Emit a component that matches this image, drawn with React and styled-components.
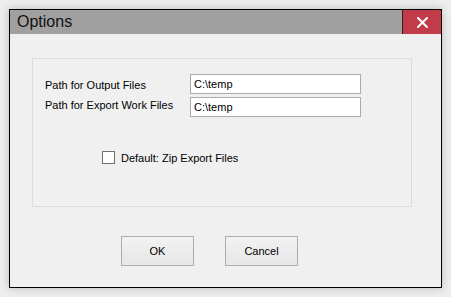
import React from "react";
import styled, {createGlobalStyle} from "styled-components";

const GlobalStyle = createGlobalStyle`
    html, body {
        margin: 0;
        padding: 0;
        background: #ededed;
    }
    body {
        font-family: "Liberation Sans", Arial, sans-serif;
        font-size: 11px;
        color: #000;
    }
`;

const Page = styled.div`
    width: 451px;
    height: 297px;
    padding: 9px 0 0 9px;
    box-sizing: border-box;
`;

const Window = styled.div`
    display: flex;
    flex-direction: column;
    width: 433px;
    height: 279px;
    border: 1px solid #000;
    background: #f0f0f0;
    box-sizing: border-box;
    box-shadow: 0 0 8px rgba(0, 0, 0, 0.22);
`;

const TitleBar = styled.div`
    display: flex;
    align-items: center;
    height: 24px;
    background: #a0a0a0;
`;

const Title = styled.div`
    flex: 1;
    padding-left: 7px;
    font-size: 16px;
    color: #111;
`;

const CloseButton = styled.div`
    display: flex;
    align-items: center;
    justify-content: center;
    width: 39px;
    height: 24px;
    border-left: 1px solid #3a1a1e;
    background: #c23b48;
    box-sizing: border-box;
`;

const Body = styled.div`
    flex: 1;
    display: flex;
    flex-direction: column;
    padding: 24px 0 0 22px;
`;

const GroupBox = styled.div`
    display: flex;
    flex-direction: column;
    width: 380px;
    height: 149px;
    padding: 15px 0 0 12px;
    border: 1px solid #dcdcdc;
    box-sizing: border-box;
`;

const FieldRow = styled.div`
    display: flex;
    align-items: ${p => p.$alignTop ? "flex-start" : "center"};
    margin-bottom: 3px;
`;

const Label = styled.label`
    width: 145px;
    padding-top: ${p => p.$offset || 0}px;
`;

const TextInput = styled.input`
    width: 171px;
    height: 20px;
    padding: 0 3px;
    border: 1px solid #ababab;
    background: #fff;
    font-family: "Liberation Sans", Arial, sans-serif;
    font-size: 11px;
    color: #000;
    box-sizing: border-box;
    outline: none;
`;

const CheckRow = styled.label`
    display: flex;
    align-items: center;
    gap: 6px;
    margin: 31px 0 0 57px;
`;

const CheckBox = styled.span`
    width: 13px;
    height: 13px;
    border: 1px solid #707070;
    background: #fff;
    box-sizing: border-box;
`;

const ButtonBar = styled.div`
    display: flex;
    gap: 31px;
    margin: 29px 0 0 89px;
`;

const Button = styled.button`
    width: 73px;
    height: 30px;
    padding: 0;
    border: 1px solid #adadad;
    background: linear-gradient(#f2f2f2, #e6e6e6);
    font-family: "Liberation Sans", Arial, sans-serif;
    font-size: 11px;
    color: #000;
`;

export default function App() {
    return (
        <Page>
            <GlobalStyle/>
            <Window>
                <TitleBar>
                    <Title>Options</Title>
                    <CloseButton>
                        <svg width="11" height="11" viewBox="0 0 11 11">
                            <path d="M1 1 L10 10 M10 1 L1 10" stroke="#fff" strokeWidth="2" strokeLinecap="square"/>
                        </svg>
                    </CloseButton>
                </TitleBar>

                <Body>
                    <GroupBox>
                        <FieldRow>
                            <Label $offset={1}>Path for Output Files</Label>
                            <TextInput defaultValue="C:\temp"/>
                        </FieldRow>
                        <FieldRow $alignTop>
                            <Label $offset={2}>Path for Export Work Files</Label>
                            <TextInput defaultValue="C:\temp"/>
                        </FieldRow>
                        <CheckRow>
                            <CheckBox/>
                            Default: Zip Export Files
                        </CheckRow>
                    </GroupBox>

                    <ButtonBar>
                        <Button>OK</Button>
                        <Button>Cancel</Button>
                    </ButtonBar>
                </Body>
            </Window>
        </Page>
    );
}
